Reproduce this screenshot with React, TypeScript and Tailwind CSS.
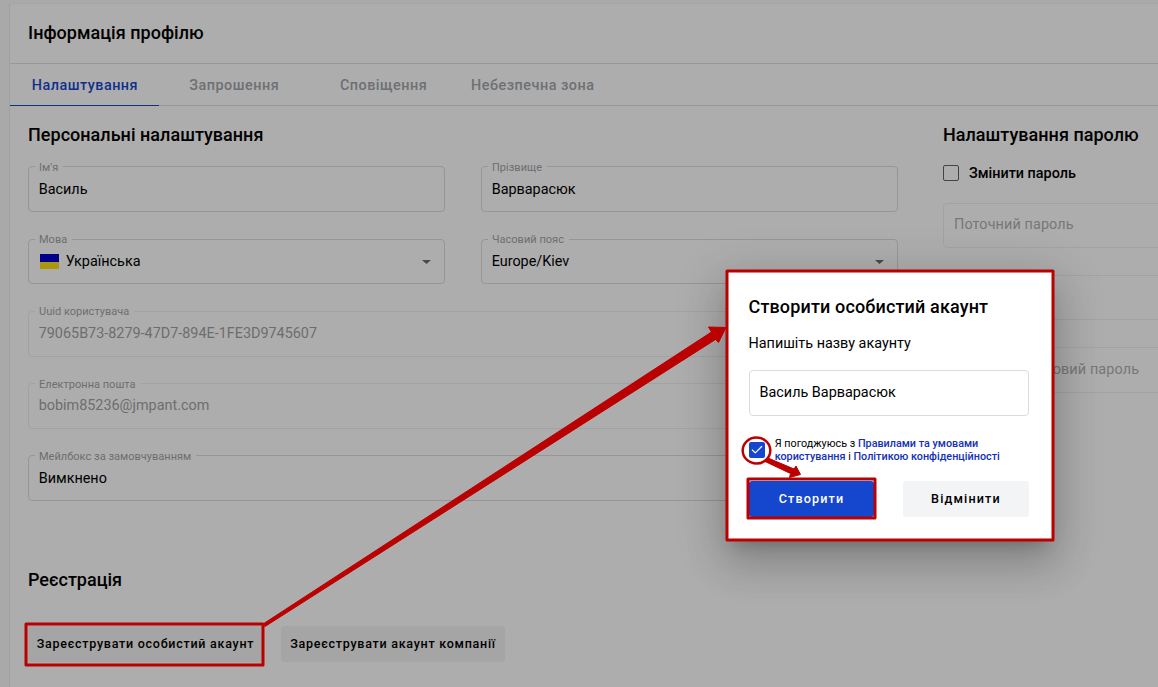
import type { ReactNode } from "react";
import { Check } from "lucide-react";

const tabs = ["Налаштування", "Запрошення", "Сповіщення", "Небезпечна зона"];

function Caret() {
  return (
    <svg className="h-[4px] w-[9px]" viewBox="0 0 9 4">
      <path d="M0 0h9L4.5 4z" fill="#4a4a4a" />
    </svg>
  );
}

function Field({
  label,
  children,
  disabled = false,
  select = false,
  className = "h-[51px]",
  legendClass = "leading-[13px]",
  valueClass = "h-[34px]",
}: {
  label: string;
  children: ReactNode;
  disabled?: boolean;
  select?: boolean;
  className?: string;
  legendClass?: string;
  valueClass?: string;
}) {
  return (
    <fieldset
      className={`min-w-0 rounded-[4px] border px-[6px] ${disabled ? "border-[#a2a2a2]" : "border-[#969696]"} ${className}`}
    >
      <legend
        className={`h-[11px] pr-[5px] pl-[4px] text-[11px] tracking-[0.02px] whitespace-nowrap text-[#6d6e70] ${legendClass}`}
      >
        {label}
      </legend>
      <div
        className={`flex items-center justify-between pr-[7px] pl-[3.7px] text-[14.4px] ${valueClass} ${disabled ? "text-[#6d6d6d]" : "text-black"}`}
      >
        <span className="flex items-center whitespace-nowrap">{children}</span>
        {select && <Caret />}
      </div>
    </fieldset>
  );
}

function PasswordField({ label, className }: { label?: string; className: string }) {
  return (
    <div
      className={`rounded-[4px] border border-[#a2a2a2] pl-[10px] text-[14.4px] leading-[20px] tracking-[0.12px] whitespace-nowrap text-[#777777] ${className}`}
    >
      {label}
    </div>
  );
}

function Flag() {
  return (
    <span className="mr-[7px] ml-[1px] flex h-[15px] w-[19px] flex-col">
      <span className="h-[8px] bg-[#00008b]" />
      <span className="h-[7px] bg-[#aa990e]" />
    </span>
  );
}

function Dialog() {
  return (
    <div className="absolute top-[271px] left-[727px] h-[269px] w-[326px] bg-white px-[22px] pt-[24px] text-black shadow-[0_11px_15px_-7px_rgba(0,0,0,0.2),0_24px_38px_3px_rgba(0,0,0,0.14),0_9px_46px_8px_rgba(0,0,0,0.12)]">
      <h2 className="-ml-[0.5px] text-[18px] leading-[24px] font-medium tracking-[0.15px] whitespace-nowrap">
        Створити особистий акаунт
      </h2>
      <p className="mt-[15px] -ml-[0.5px] text-[14.4px] leading-[20px] whitespace-nowrap">
        Напишіть назву акаунту
      </p>
      <div className="mt-[16px] flex h-[46px] w-[280px] items-center rounded-[4px] border border-[#dcdcdc] pl-[9.5px] text-[14.4px]">
        Василь Варварасюк
      </div>
      <div className="mt-[20px] flex h-[28px]">
        <span className="mt-[6px] flex size-[16px] items-center justify-center rounded-[2px] bg-[#1546ce] text-white">
          <Check size={14} strokeWidth={2} />
        </span>
        <p className="mt-[1px] ml-[9.7px] text-[10.8px] leading-[13px] whitespace-nowrap">
          Я погоджуюсь з <span className="font-medium text-[#1330b8]">Правилами та умовами</span>
          <br />
          <span className="font-medium text-[#1330b8]">користування</span> і{" "}
          <span className="font-medium text-[#1330b8]">Політикою конфіденційності</span>
        </p>
      </div>
      <div className="mt-[17px] flex justify-between pr-[2px] text-[12.6px] font-medium tracking-[1.15px]">
        <button className="h-[36px] w-[125px] rounded-[3px] bg-[#1546ce] text-white">Створити</button>
        <button className="h-[36px] w-[126px] rounded-[3px] bg-[#f3f4f6]">Відмінити</button>
      </div>
    </div>
  );
}

function Annotations() {
  return (
    <svg className="absolute inset-0 h-[687px] w-[1158px]" viewBox="0 0 1158 687">
      <g fill="none" stroke="#ba0000" strokeLinejoin="round">
        <rect x="727" y="271" width="326" height="269" strokeWidth="3" />
        <rect x="26" y="624" width="237" height="41" strokeWidth="3" />
        <rect x="748" y="479" width="127" height="39" strokeWidth="3" />
        <ellipse cx="756.5" cy="450.5" rx="13.8" ry="13" strokeWidth="2.5" />
      </g>
      <g fill="#ba0000" stroke="#ba0000" strokeLinejoin="round" strokeWidth="1">
        <path d="M263 624L711.500 332L708.500 327L726 327.500L718.500 342.500L715.500 339.500L265 626.500Z" />
        <path d="M768 458L794 469L796 466L800.500 474.500L789.500 477.500L790.500 473.500L764 461Z" />
      </g>
    </svg>
  );
}

export default function App() {
  return (
    <div className="relative flex h-[687px] w-[1158px] overflow-hidden bg-[#a9a9a9] pt-[3px] pl-[9px] font-[Roboto,sans-serif] text-black">
      <main className="flex w-[1300px] shrink-0 flex-col rounded-tl-[4px] border-t border-l border-t-[#a6a6a6] border-l-[#9f9f9f] bg-[#adadad]">
        <header className="flex h-[60px] shrink-0 items-center border-b border-[#989898] pb-[2px] pl-[18px]">
          <h1 className="text-[18px] font-medium tracking-[0.03px]">Інформація профілю</h1>
        </header>
        <nav className="flex h-[42px] shrink-0 border-b border-[#989898]">
          {tabs.map((tab, i) => (
            <span
              key={tab}
              className={`-mb-px flex w-[149.3px] items-center justify-center border-b pt-[2px] pl-[0.5px] text-[14.4px] font-medium tracking-[0.5px] ${
                i === 0 ? "border-[#0f2f8c] text-[#11308c]" : "border-transparent text-[#6d7074]"
              }`}
            >
              {tab}
            </span>
          ))}
        </nav>
        <div className="flex pl-[18px]">
          <section className="w-[870px] shrink-0">
            <h2 className="mt-[17px] text-[18px] leading-[24px] font-medium tracking-[0.03px]">
              Персональні налаштування
            </h2>
            <div className="mt-[14px] grid grid-cols-[417px_417px] gap-x-[36px]">
              <Field label="Ім'я" valueClass="h-[36px]">
                Василь
              </Field>
              <Field label="Прізвище" valueClass="h-[36px]">
                Варварасюк
              </Field>
              <Field label="Мова" select className="mt-[22px] h-[50px]" legendClass="leading-[11px]">
                <Flag />
                Українська
              </Field>
              <Field label="Часовий пояс" select className="mt-[22px] h-[50px]" legendClass="leading-[11px]">
                Europe/Kiev
              </Field>
              <Field
                label="Uuid користувача"
                disabled
                className="col-span-2 mt-[22px] h-[51px]"
                legendClass="leading-[11px]"
              >
                79065B73-8279-47D7-894E-1FE3D9745607
              </Field>
              <Field label="Електронна пошта" disabled className="col-span-2 mt-[21px] h-[51px]">
                bobim85236@jmpant.com
              </Field>
              <Field
                label="Мейлбокс за замовчуванням"
                className="col-span-2 mt-[21px] h-[51px]"
                valueClass="h-[36px]"
              >
                Вимкнено
              </Field>
            </div>
            <h2 className="mt-[67px] text-[18px] leading-[24px] font-medium">Реєстрація</h2>
            <div className="mt-[34px] flex gap-[18px] text-[12.5px] font-medium tracking-[0.74px] whitespace-nowrap">
              <button className="h-[36px] w-[235px] rounded-[3px] bg-[#a5a5a5]">
                Зареєструвати особистий акаунт
              </button>
              <button className="h-[36px] w-[224px] rounded-[3px] bg-[#a5a5a5]">
                Зареєструвати акаунт компанії
              </button>
            </div>
          </section>
          <section className="ml-[45px] w-[400px] shrink-0">
            <h2 className="mt-[17px] text-[18px] leading-[24px] font-medium tracking-[0.03px]">
              Налаштування паролю
            </h2>
            <label className="mt-[17px] flex items-center text-[14.4px] leading-[20px] font-medium">
              <span className="mr-[10px] mb-[2px] size-[16px] rounded-[2px] border border-[#444444]" />
              Змінити пароль
            </label>
            <PasswordField label="Поточний пароль" className="mt-[19px] h-[45px] pt-[11px]" />
            <PasswordField className="mt-[27px] h-[45px] pt-[11px]" />
            <PasswordField label="Підтвердити новий пароль" className="mt-[27px] h-[46px] pt-[12px]" />
          </section>
        </div>
      </main>
      <Dialog />
      <Annotations />
    </div>
  );
}
